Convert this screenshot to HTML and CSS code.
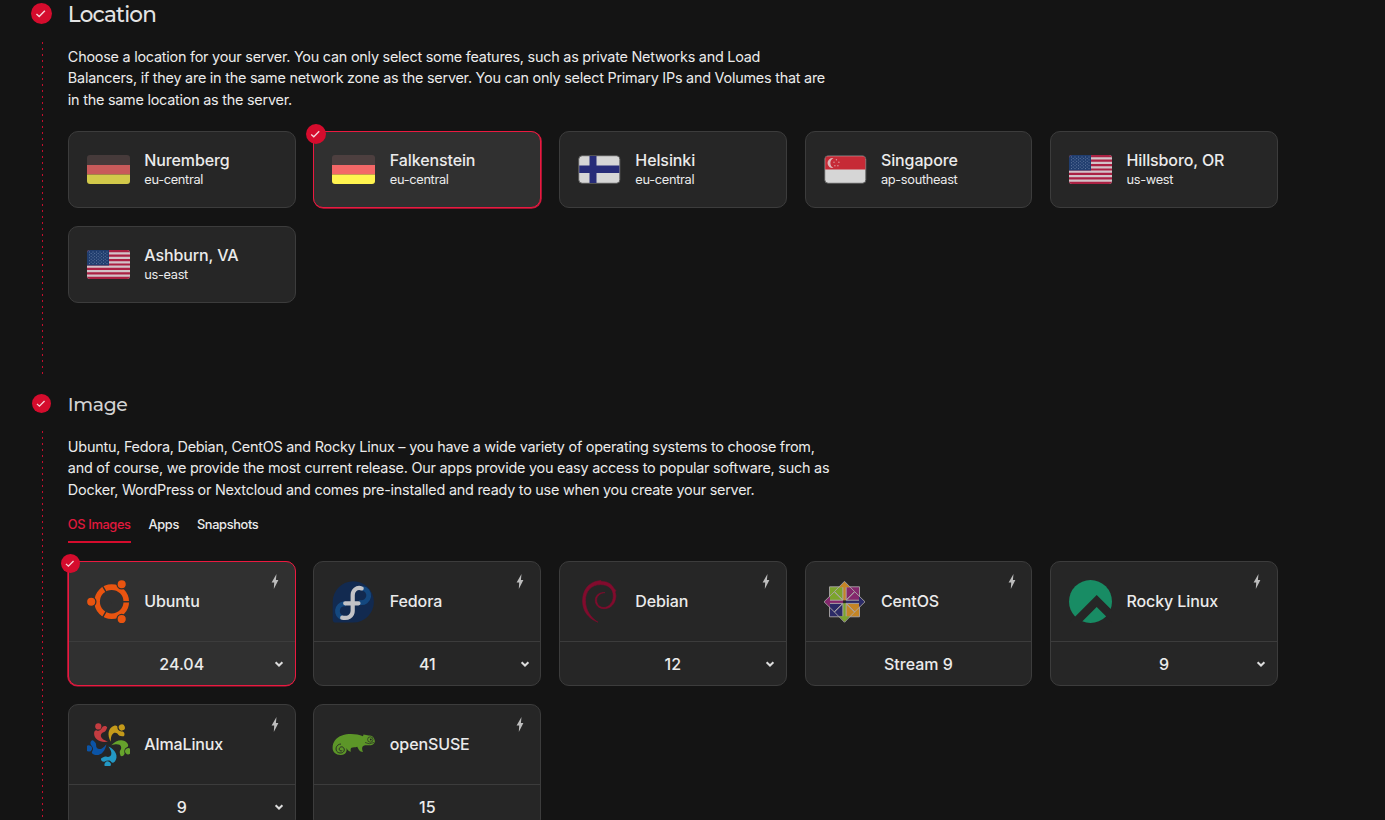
FILE: index.html
```html
<!DOCTYPE html>
<html lang="en">
<head>
<meta charset="utf-8">
<title>Create a server</title>
<link rel="stylesheet" href="styles.css">
</head>
<body>
<svg class="defs" aria-hidden="true">
  <symbol id="check" viewBox="0 0 20 20"><path d="M5.200 10.400 7.800 12.800 13.200 7.300" fill="none" stroke="#f6d5db" stroke-width="1.400"/></symbol>
  <symbol id="bolt" viewBox="0 0 8 15"><path d="M5.500 0 .6 8.400H3.200L2.800 15 7.400 5.900H4.900Z" fill="#bdbdbd"/></symbol>
  <symbol id="chev" viewBox="0 0 10 8"><path d="M1.600 2.200 5 5.500 8.400 2.200" fill="none" stroke="#dcdcdc" stroke-width="2"/></symbol>
  <symbol id="de" viewBox="0 0 43 29"><path fill="#463a3a" d="M0 0h43v10H0z"/><path fill="#c85a5a" d="M0 10h43v9.500H0z"/><path fill="#d2c94a" d="M0 19.500h43V29H0z"/></symbol>
  <symbol id="de-on" viewBox="0 0 43 29"><path fill="#4d3f3f" d="M0 0h43v10H0z"/><path fill="#f46767" d="M0 10h43v9.500H0z"/><path fill="#fff34f" d="M0 19.500h43V29H0z"/></symbol>
  <symbol id="fi" viewBox="0 0 43 29"><rect x=".7" y=".7" width="41.200" height="27.600" rx="3.500" fill="#d6d6d6" stroke="#555" stroke-width="1"/><path fill="#272c78" d="M11.500 1h7v9.500h22.900v7.500H18.500v10h-7V18H1.200v-7.500h10.300z"/></symbol>
  <symbol id="sg" viewBox="0 0 43 29"><rect x=".7" y=".7" width="41.200" height="27.600" rx="3.500" fill="#d6d6d6" stroke="#555" stroke-width="1"/><path fill="#c62a36" d="M1.200 14.500V4.200a3 3 0 0 1 3-3h34.200a3 3 0 0 1 3 3v10.300z"/><path fill="#ddb5b8" d="M9.500 3.200a5 5 0 1 0 0 9.800 5.400 5.400 0 0 1 0-9.800"/><g fill="#d99fa3"><circle cx="12.400" cy="4.800" r=".7"/><circle cx="14.900" cy="7.200" r=".7"/><circle cx="13.900" cy="10.800" r=".7"/><circle cx="10.900" cy="10.800" r=".7"/><circle cx="10" cy="7.200" r=".7"/></g></symbol>
  <symbol id="us" viewBox="0 0 43 29"><path fill="#d2c3c8" d="M0 0h43v29H0z"/><path d="M0 1.115h43M0 5.577h43M0 10.038h43M0 14.500h43M0 18.962h43M0 23.423h43M0 27.885h43" stroke="#ab2143" stroke-width="2.230"/><path fill="#203d6e" d="M0 0h22v15.600H0z"/><path d="M2 2h19M2 4.900h19M2 7.800h19M2 10.700h19M2 13.600h19" stroke="#6a80a6" stroke-width=".9" stroke-dasharray="1 2.500"/><path d="M3.700 3.450h17M3.700 6.350h17M3.700 9.250h17M3.700 12.150h17" stroke="#6a80a6" stroke-width=".9" stroke-dasharray="1 2.500"/></symbol>
  <g id="alma-person"><circle cx="11.300" cy="3.400" r="3.100"/><path d="M21 18.600C13.500 20 6.800 16.500 7.100 10C7.400 7.800 8.500 7 9.800 7.500C12.300 8.400 14.200 6.500 15.600 3.800C17.300 2.400 19.800 3 20.200 4.600C19.300 6.500 18.900 8.400 17.200 9C13 10 11.500 15.500 21 18.600Z"/></g>
</svg>

<main class="page">
  <section class="step step-location">
    <div class="rail"><svg class="dot dot-lg"><use href="#check"/></svg><i class="line"></i></div>
    <div class="body">
      <h2 class="h-location">Location</h2>
      <p>Choose a location for your server. You can only select some features, such as private Networks and Load<br>Balancers, if they are in the same network zone as the server. You can only select Primary IPs and Volumes that are<br>in the same location as the server.</p>
      <div class="grid">
        <div class="card loc"><svg class="flag"><use href="#de"/></svg><div><b>Nuremberg</b><small>eu-central</small></div></div>
        <div class="card loc on"><svg class="dot badge"><use href="#check"/></svg><svg class="flag"><use href="#de-on"/></svg><div><b>Falkenstein</b><small>eu-central</small></div></div>
        <div class="card loc"><svg class="flag"><use href="#fi"/></svg><div><b>Helsinki</b><small>eu-central</small></div></div>
        <div class="card loc"><svg class="flag"><use href="#sg"/></svg><div><b>Singapore</b><small>ap-southeast</small></div></div>
        <div class="card loc"><svg class="flag"><use href="#us"/></svg><div><b>Hillsboro, OR</b><small>us-west</small></div></div>
        <div class="card loc"><svg class="flag"><use href="#us"/></svg><div><b>Ashburn, VA</b><small>us-east</small></div></div>
      </div>
    </div>
  </section>

  <section class="step step-image">
    <div class="rail"><svg class="dot"><use href="#check"/></svg><i class="line"></i></div>
    <div class="body">
      <h2 class="h-image">Image</h2>
      <p>Ubuntu, Fedora, Debian, CentOS and Rocky Linux – you have a wide variety of operating systems to choose from,<br>and of course, we provide the most current release. Our apps provide you easy access to popular software, such as<br>Docker, WordPress or Nextcloud and comes pre-installed and ready to use when you create your server.</p>
      <nav class="tabs"><a class="active">OS Images</a><a>Apps</a><a>Snapshots</a></nav>
      <div class="grid">
        <div class="card os on">
          <svg class="dot badge"><use href="#check"/></svg>
          <div class="top">
            <svg class="logo" viewBox="0 0 43 43"><circle cx="24.700" cy="21.700" r="14.600" fill="none" stroke="#e95410" stroke-width="5.600"/><path d="M24.700 21.700H43M24.700 21.700 15.500 5.800M24.700 21.700 15.500 37.600" stroke="#303030" stroke-width="1.400"/><g fill="#e95410" stroke="#303030" stroke-width="1.300"><circle cx="4.200" cy="21.700" r="4.700"/><circle cx="34.700" cy="4.200" r="4.700"/><circle cx="34.700" cy="39.100" r="4.700"/></g></svg>
            <b>Ubuntu</b><svg class="bolt"><use href="#bolt"/></svg>
          </div>
          <div class="ver">24.04<svg class="chev"><use href="#chev"/></svg></div>
        </div>
        <div class="card os">
          <div class="top">
            <svg class="logo" viewBox="0 0 43 43"><path d="M21.300 1.300A20.600 20.600 0 1 1 21.300 42.500H3.500Q.7 42.500.7 39.700V21.900A20.600 20.600 0 0 1 21.300 1.300Z" fill="#122a50"/><path d="M30.500 8.300A7.200 7.200 0 0 1 28.500 22.600H27M10 37.700A7.200 7.200 0 0 1 11.500 23.900H14" fill="none" stroke="#14487f" stroke-width="4.800"/><path d="M29.700 8.400C24.500 6.800 20.700 10.200 20.700 15V31C20.700 36 16 38.900 10.200 37.600M13.200 23.300H26.500" fill="none" stroke="#c3c3c6" stroke-width="4.200" stroke-linecap="round"/></svg>
            <b>Fedora</b><svg class="bolt"><use href="#bolt"/></svg>
          </div>
          <div class="ver">41<svg class="chev"><use href="#chev"/></svg></div>
        </div>
        <div class="card os">
          <div class="top">
            <svg class="logo" viewBox="0 0 43 43"><path fill="#820b2d" stroke="#820b2d" stroke-width=".6" d="M20 42.200C10 38.500 4.600 30.500 4.600 21C4.600 9.500 11 2.500 20 1L23 .5L23 1.500C30 1.300 34 4.500 35.500 8L37.800 10.500L37 12L37.900 15.500C37.600 23.500 33 28.700 26 28.700C20.500 28.700 17 24.500 17.300 19.700C17.700 15 21.500 12 27 12.600C22 13.100 18.800 16 18.600 20C18.600 24.500 22 27.700 26 27.500C31 27.300 35.300 22.500 35.300 16C35.300 8.500 30 4.600 22.500 4.600C13 4.600 7.400 11.500 7.400 20.500C7.400 30 12.500 37.500 20 42.200Z"/></svg>
            <b>Debian</b><svg class="bolt"><use href="#bolt"/></svg>
          </div>
          <div class="ver">12<svg class="chev"><use href="#chev"/></svg></div>
        </div>
        <div class="card os">
          <div class="top">
            <svg class="logo" viewBox="0 0 43 43"><g transform="translate(20.500 21.800)" stroke="#aaa6a7" stroke-width=".9">
              <path fill="#7ca42c" d="M-15-15H-1.200V-1.200H-15z"/><path fill="#84276c" d="M1.200-15H15V-1.200H1.200z"/><path fill="#2b2a66" d="M-15 1.200H-1.200V15H-15z"/><path fill="#c48526" d="M1.200 1.200H15V15H1.200z"/>
              <path fill="#c48526" stroke="none" d="M0-20.300-5.500-14.500H-1.600V-1H1.600V-14.500H5.500z"/><path fill="#2b2a66" stroke="none" d="M20.300 0 14.500-5.500V-1.600H1V1.600H14.500V5.500z"/><path fill="#7ca42c" stroke="none" d="M0 20.300 5.500 14.500H1.600V1H-1.600V14.500H-5.500z"/><path fill="#84276c" stroke="none" d="M-20.300 0-14.500 5.500V1.600H-1V-1.600H-14.500V-5.500z"/>
              <path fill="none" d="M0-20.500 10-10.300 1.600-1.800V-14.500M0-20.500-10-10.300-1.600-1.800V-14.500M20.500 0 10.300-10 1.800-1.600H14.500M20.500 0 10.300 10 1.800 1.600H14.500M0 20.500 10 10.300 1.600 1.800V14.500M0 20.500-10 10.300-1.600 1.800V14.500M-20.500 0-10.300-10-1.800-1.600H-14.500M-20.500 0-10.300 10-1.800 1.600H-14.500"/>
              <path fill="#262626" stroke="none" d="M-1.300-1.300h2.600v2.600h-2.600z"/></g></svg>
            <b>CentOS</b><svg class="bolt"><use href="#bolt"/></svg>
          </div>
          <div class="ver">Stream 9</div>
        </div>
        <div class="card os">
          <div class="top">
            <svg class="logo" viewBox="0 0 43 43"><circle cx="21.500" cy="21.500" r="21.500" fill="#188c64"/><path fill="#262626" d="M27.700 15 44 31.300V43.300L27.700 27 10 44.700H-2z"/></svg>
            <b>Rocky Linux</b><svg class="bolt"><use href="#bolt"/></svg>
          </div>
          <div class="ver">9<svg class="chev"><use href="#chev"/></svg></div>
        </div>
        <div class="card os">
          <div class="top">
            <svg class="logo" viewBox="0 0 43 43"><use href="#alma-person" fill="#c43c40"/><use href="#alma-person" fill="#c49a1a" transform="rotate(70 22.300 20.700)"/><use href="#alma-person" fill="#66a32c" transform="rotate(142 22 21)"/><use href="#alma-person" fill="#2398c4" transform="rotate(215 22 21)"/><use href="#alma-person" fill="#0b54a6" transform="rotate(289 22 21)"/></svg>
            <b>AlmaLinux</b><svg class="bolt"><use href="#bolt"/></svg>
          </div>
          <div class="ver">9<svg class="chev"><use href="#chev"/></svg></div>
        </div>
        <div class="card os">
          <div class="top">
            <svg class="logo" viewBox="0 0 43 43"><path fill="#5c9628" d="M.6 25C.6 19 4 14.500 10 12.500C17 10 25 11 31 13.200L31.500 11.400C35 12.500 39 12 40.500 13.400C42 14.600 42.600 16.600 42.900 18.200C42.600 20.500 41 21.800 39 22.200C36.500 22.600 33.500 22 31.700 22.700C29.500 23.800 30 26.500 31 29C27.500 28.800 26.500 26 25.300 23.700C23 24.500 21 24 19.500 24.800C18.300 25.800 18.500 27.500 18.900 28.700C16.500 28.700 15 26.500 14.200 24.800C15.500 28 14 31.700 9 32C4 32.200.6 29 .6 25Z"/><path d="M10.300 27.700C8.600 28.700 6.800 27.300 7.300 25.600C8.200 22.700 12.500 23.500 12.300 27C12 30.500 6.800 31 4.800 28.300C3 25.500 4.500 21.300 9 21" fill="none" stroke="#262626" stroke-width=".9"/><circle cx="38.300" cy="16.500" r="2.700" fill="none" stroke="#262626" stroke-width=".7"/><circle cx="38.800" cy="16.500" r=".9" fill="#262626"/><path d="M33 19.500Q37 22 42 19.500" fill="none" stroke="#262626" stroke-width=".7"/></svg>
            <b>openSUSE</b><svg class="bolt"><use href="#bolt"/></svg>
          </div>
          <div class="ver">15</div>
        </div>
      </div>
    </div>
  </section>
</main>
</body>
</html>
```
FILE: styles.css
```css
* { box-sizing: border-box; }
body { margin: 0; height: 820px; overflow: hidden; background: #141414; color: #ebebeb; font-family: Inter, "Liberation Sans", sans-serif; }
.defs { display: none; }
svg { display: block; flex: none; }
.page { padding-left: 31px; }
.step { display: flex; gap: 15.860px; height: 390px; }
.step-image { height: 470px; }
.rail { width: 21px; display: flex; flex-direction: column; align-items: center; padding-top: 3px; }
.dot { width: 19px; height: 19px; border-radius: 50%; background: #d50c2d; }
.dot-lg { width: 21px; height: 21px; }
.line { width: 1px; flex: 1; margin: 18px 0 16px 2px; background: repeating-linear-gradient(#c40d2c 0 2px, transparent 2px 6px); }
.step-image .rail { padding-top: 4px; }
.step-image .line { margin-bottom: 0; }
.body { width: 1210px; }
h2 { margin: 0; font-family: Montserrat, Lato, sans-serif; font-weight: 500; height: 45.800px; line-height: 29px; color: #e4e4e4; white-space: nowrap; }
.h-location { font-size: 21.500px; letter-spacing: -.8px; }
.h-image { font-size: 18.800px; letter-spacing: -.35px; line-height: 30px; color: #d2d2d2; }
p { margin: 0; font-size: 14.400px; line-height: 21.600px; letter-spacing: -.235px; white-space: nowrap; }
.grid { display: grid; grid-template-columns: repeat(5, 1fr); gap: 18px 17.800px; margin-top: 20.200px; }
.card { position: relative; background: #262626; border: 1px solid #3c3c3c; border-radius: 10px; min-width: 0; }
.card.on { background: #303030; border-color: #ea1a40; box-shadow: .5px .5px 0 .3px #c9163a; }
.card.os.on { box-shadow: -.6px .3px 0 .2px #c9163a; }
.card b { font-size: 16px; font-weight: 500; line-height: 20px; letter-spacing: -.11px; white-space: nowrap; }
.loc { height: 77px; display: flex; align-items: center; gap: 14.400px; padding-left: 18px; }
.loc b, .loc small { display: block; }
.loc small { font-size: 12.800px; line-height: 18px; letter-spacing: -.32px; padding-top: 1px; margin-bottom: -1px; }
.flag { width: 43px; height: 29px; border-radius: 3px; }
.badge { position: absolute; left: -8px; top: -8px; width: 20px; height: 20px; }
.os .badge { width: 19px; height: 19px; }
.tabs { display: flex; gap: 18px; margin-top: 12.200px; font-size: 12.800px; font-weight: 500; line-height: 24px; letter-spacing: -.36px; }
.tabs a { height: 30px; }
.tabs .active { color: #e0193d; border-bottom: 2px solid #d50c2d; }
.step-image .grid { margin-top: 18px; }
.os { height: 125px; display: flex; flex-direction: column; }
.top { position: relative; height: 79px; display: flex; align-items: center; gap: 14.400px; padding-left: 18px; }
.logo { width: 43px; height: 43px; }
.bolt { position: absolute; right: 15.700px; top: 12px; width: 8px; height: 15px; }
.ver { position: relative; flex: 1; display: flex; align-items: center; justify-content: center; border-top: 1px solid #3c3c3c; padding-top: 2px; font-size: 16px; font-weight: 500; }
.chev { position: absolute; right: 10.500px; top: 18px; width: 10px; height: 8px; }
```
